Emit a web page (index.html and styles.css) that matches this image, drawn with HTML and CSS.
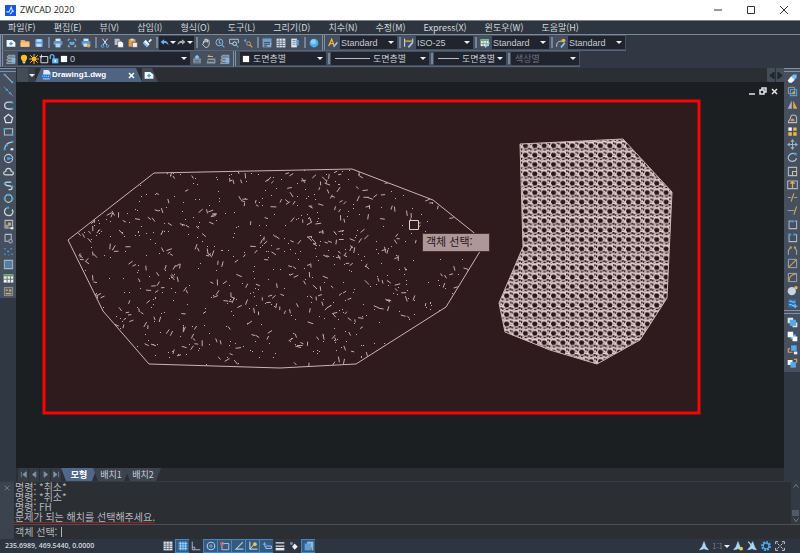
FILE: index.html
```html
<!DOCTYPE html>
<html lang="ko">
<head>
  <meta charset="UTF-8">
  <meta name="viewport" content="width=device-width, initial-scale=1">
  <title>ZWCAD 2020</title>
  <link rel="stylesheet" href="styles.css">
</head>
<body>
  <!-- icon sprite, 16x16 grid -->
  <svg class="sprite" aria-hidden="true">
    <symbol id="new" viewBox="0 0 16 16"><path d="M1 3h9l5 4v7H1z" fill="#f4f8fb"/><path d="M8 6v6M5 9h6" stroke="#3f9bdc" stroke-width="2"/></symbol>
    <symbol id="open" viewBox="0 0 16 16"><path d="M1 3h6l2 2h6v9H1z" fill="#f0ac5c"/><path d="M1 7h14v7H1z" fill="#ffc57f"/></symbol>
    <symbol id="save" viewBox="0 0 16 16"><path d="M2 2h12v12H2z" fill="#5f9ee0"/><path d="M4 2h8v4H4zM4 9h8v5H4z" fill="#c9dcf2"/></symbol>
    <symbol id="print" viewBox="0 0 16 16"><path d="M4 1h8v4H4z" fill="#dfe8f0"/><path d="M1 5h14v6H1z" fill="#5a9bd8"/><path d="M4 9h8v6H4z" fill="#b8d4ee"/></symbol>
    <symbol id="preview" viewBox="0 0 16 16"><path d="M2 5V2h3M11 2h3v3M14 11v3h-3M5 14H2v-3" fill="none" stroke="#9db2c6" stroke-width="1.5"/><path d="M4 6h8v5H4z" fill="#5fa8e6"/></symbol>
    <symbol id="publish" viewBox="0 0 16 16"><path d="M4 1h8v4H4z" fill="#dfe8f0"/><path d="M1 5h14v6H1z" fill="#5a9bd8"/><path d="M4 9h6v5H4z" fill="#d5e4f2"/><circle cx="12" cy="12" r="3" fill="#e5a94e"/></symbol>
    <symbol id="cut" viewBox="0 0 16 16"><path d="M4 1l7 10M12 1L5 11" stroke="#dde5ee" stroke-width="1.6"/><circle cx="4" cy="13" r="2" fill="none" stroke="#57a7e4" stroke-width="1.6"/><circle cx="12" cy="13" r="2" fill="none" stroke="#57a7e4" stroke-width="1.6"/></symbol>
    <symbol id="copy" viewBox="0 0 16 16"><path d="M1 1h7l2 2v8H1z" fill="#b7c2cf"/><path d="M6 5h6l3 3v7H6z" fill="#fff" stroke="#454f5d"/></symbol>
    <symbol id="paste" viewBox="0 0 16 16"><path d="M1 2h11v12H1z" fill="#e79a4a"/><path d="M4 1h5v3H4z" fill="#dbe2ea"/><path d="M7 7h8v8H7z" fill="#f3efe8" stroke="#454f5d"/></symbol>
    <symbol id="brush" viewBox="0 0 16 16"><path d="M10 5l4-4 2 2-4 4z" fill="#e9f0f7"/><path d="M6 3l6 7-4 5-7-7z" fill="#84c1f2"/><path d="M6 3l6 7-2 2-7-6z" fill="#f2f6fa"/></symbol>
    <symbol id="undo" viewBox="0 0 16 16"><path d="M1 7l6-5v3c5 0 8 3 8 8-2-3-4-4-8-4v3z" fill="#65b2f3"/></symbol>
    <symbol id="redo" viewBox="0 0 16 16"><path d="M15 7L9 2v3c-5 0-8 3-8 8 2-3 4-4 8-4v3z" fill="#a8b0b8"/></symbol>
    <symbol id="hand" viewBox="0 0 16 16"><path d="M4 9V5l2 2V2h2v4-4h2v5l1-4 2 1v7l-3 4H7l-5-5z" fill="none" stroke="#d5dbe2" stroke-width="1.3"/></symbol>
    <symbol id="zoomrt" viewBox="0 0 16 16"><circle cx="7" cy="7" r="5.5" fill="none" stroke="#9db7d0" stroke-width="1.5"/><path d="M7 3v5h3M11 11l4 4" fill="none" stroke="#58abea" stroke-width="2"/></symbol>
    <symbol id="zoomwin" viewBox="0 0 16 16"><path d="M15 8V2H1v7h5" fill="none" stroke="#b9c6d3" stroke-width="1.5"/><circle cx="9" cy="9" r="3" fill="none" stroke="#d7e0e8" stroke-width="1.5"/><path d="M11 11l4 4" stroke="#58abea" stroke-width="2"/></symbol>
    <symbol id="zoomprev" viewBox="0 0 16 16"><path d="M1 4l4-3v6z" fill="#58abea"/><circle cx="9" cy="9" r="3" fill="none" stroke="#b9a88c" stroke-width="1.5"/><path d="M11 11l4 4" stroke="#d9a34b" stroke-width="2"/></symbol>
    <symbol id="props" viewBox="0 0 16 16"><path d="M1 1h14v14H1z" fill="#8aa4bd"/><path d="M1 1h14v3H1z" fill="#4ea2e6"/><path d="M3 7h10M3 10h10M3 13h6" stroke="#26384a" stroke-width="1.3"/><path d="M8 12l3 2 4-6" fill="none" stroke="#7cc3ff" stroke-width="1.5"/></symbol>
    <symbol id="grid" viewBox="0 0 16 16"><path d="M1 1h14v14H1z" fill="#e1e8ef"/><path d="M1 5h14M1 8.500h14M1 12h14M5 1v14M10 1v14" stroke="#516477" stroke-width="1.200"/></symbol>
    <symbol id="sheet" viewBox="0 0 16 16"><path d="M2 1h9v14H2z" fill="#dbe4ec"/><path d="M4 4h5M4 7h5M4 10h5" stroke="#4a6076"/><path d="M10 3h4v9h-4z" fill="#4ea2e6"/></symbol>
    <symbol id="help" viewBox="0 0 16 16"><circle cx="8" cy="8" r="7" fill="#4aaef5"/><circle cx="7" cy="6" r="4" fill="#8bd0ff"/></symbol>
    <symbol id="textstyle" viewBox="0 0 16 16"><path d="M1 13L6 2l4 11M3 9h6" fill="none" stroke="#f0b437" stroke-width="2"/><path d="M9 14l6-7" stroke="#8ec6f5" stroke-width="2.500"/></symbol>
    <symbol id="dimstyle" viewBox="0 0 16 16"><path d="M1 1v13M14 1v6" stroke="#dbe2e9" stroke-width="1.600"/><path d="M2 5h11" stroke="#f0b437" stroke-width="2"/><path d="M7 15l7-8" stroke="#a7cdec" stroke-width="2.500"/></symbol>
    <symbol id="tablestyle" viewBox="0 0 16 16"><path d="M1 2h13v11H1z" fill="#e8efe8"/><path d="M1 2h13v3H1z" fill="#6fae72"/><path d="M1 9h13M5 5v8M10 5v8" stroke="#657a6c"/><path d="M8 15l7-8" stroke="#8ec6f5" stroke-width="2.500"/></symbol>
    <symbol id="leaderstyle" viewBox="0 0 16 16"><path d="M1 14c0-8 3-9 9-9" fill="none" stroke="#c1cad3" stroke-width="1.600"/><circle cx="12" cy="4" r="3" fill="#f0b437"/><path d="M8 15l6-7" stroke="#8ec6f5" stroke-width="2.500"/></symbol>
    <symbol id="layers" viewBox="0 0 16 16"><path d="M4 2h10v3H2zM3 7h11v3H1zM3 12h11v3H1z" fill="#59687a" stroke="#cbd5df"/><path d="M9 6h6v8H9z" fill="#7db9e8"/></symbol>
    <symbol id="bulb" viewBox="0 0 16 16"><circle cx="8" cy="6" r="5" fill="#ffc21f"/><path d="M5 9h6v3H5z" fill="#ffc21f"/><path d="M6 12h4v3H6z" fill="#d3d7db"/></symbol>
    <symbol id="sun" viewBox="0 0 16 16"><circle cx="8" cy="8" r="3.500" fill="#ffb81f"/><path d="M8 0v16M0 8h16M2 2l12 12M14 2L2 14" stroke="#ffb81f" stroke-width="1.600"/></symbol>
    <symbol id="vpfreeze" viewBox="0 0 16 16"><path d="M3 4h11v10H3zM1 4h4M4 1v5" fill="none" stroke="#dce2e8" stroke-width="1.500"/></symbol>
    <symbol id="lock" viewBox="0 0 16 16"><path d="M2 8V4c0-4 6-4 6 0v4" fill="none" stroke="#63b7f4" stroke-width="2"/><path d="M5 7h10v8H5z" fill="#63b7f4"/><path d="M10 9v4" stroke="#fff" stroke-width="2"/></symbol>
    <symbol id="white" viewBox="0 0 16 16"><path d="M3 3h10v10H3z" fill="#fff"/></symbol>
    <symbol id="layercur" viewBox="0 0 16 16"><path d="M2 7h12v8H2z" fill="#8c99a6"/><path d="M4 10h8M4 13h8" stroke="#36414d"/><path d="M4 5l4-4 4 4-4 3z" fill="#86c4f5"/></symbol>
    <symbol id="layerprev" viewBox="0 0 16 16"><path d="M3 7h12v8H1z" fill="#8c99a6"/><path d="M3 11h10" stroke="#36414d" stroke-width="2"/><path d="M3 4h8M3 4l3-3" stroke="#d8b36a" stroke-width="1.600"/></symbol>
    <symbol id="app" viewBox="0 0 16 16"><path d="M0 0h16v16H0z" fill="#1655e8"/><path d="M2 10h4l3-7 2 6M7 13c4 0 1-5 6-4" fill="none" stroke="#d5e7ff" stroke-width="1.500"/></symbol>
    <symbol id="dwg" viewBox="0 0 16 16"><path d="M4 0h8l3 4v9H3z" fill="#dceaf8"/><path d="M1 7h14v6H1z" fill="#1f78dc"/><path d="M3 9v2M6 9v2M9 9v2M12 9v2" stroke="#fff"/><path d="M3 13h11v2H3z" fill="#8dbcf0"/></symbol>
    <symbol id="line" viewBox="0 0 16 16"><path d="M2 2l12 12" stroke="#a9b8c6" stroke-width="1.500"/><path d="M1 1h3v3H1zM12 12h3v3h-3z" fill="#39a8dd"/></symbol>
    <symbol id="xline" viewBox="0 0 16 16"><path d="M1 1l14 14" stroke="#7e92a5" stroke-width="1.300"/><path d="M4 4h3v3H4zM9 9h3v3H9z" fill="#39a8dd"/></symbol>
    <symbol id="pline" viewBox="0 0 16 16"><path d="M13 3H8C0 3 1 13 8 13h5" fill="none" stroke="#cbd4dc" stroke-width="2"/><path d="M12 2h3v3h-3zM12 11h3v3h-3z" fill="#39a8dd"/></symbol>
    <symbol id="polygon" viewBox="0 0 16 16"><path d="M8 2l6 5-2 7H4L2 7z" fill="none" stroke="#dde3e9" stroke-width="1.800"/></symbol>
    <symbol id="rect" viewBox="0 0 16 16"><path d="M2 4h12v9H2z" fill="none" stroke="#b5c0cb" stroke-width="1.500"/><path d="M1 3h3v3H1zM12 11h3v3h-3z" fill="#39a8dd"/></symbol>
    <symbol id="arc" viewBox="0 0 16 16"><path d="M2 14C3 7 7 3 14 3" fill="none" stroke="#c5cfd8" stroke-width="1.700"/><path d="M1 12h3v3H1zM4 6h3v3H4zM12 1h3v3h-3z" fill="#39a8dd"/><path d="M11 12h4v3h-4z" fill="#eef1f4"/></symbol>
    <symbol id="circle" viewBox="0 0 16 16"><circle cx="8" cy="8" r="6" fill="none" stroke="#bcc8d3" stroke-width="1.700"/><path d="M8 8h6" stroke="#39a8dd" stroke-width="1.500"/><path d="M6 6h4v4H6z" fill="#39a8dd"/></symbol>
    <symbol id="cloud" viewBox="0 0 16 16"><path d="M4 13c-4 0-4-5 0-5 0-6 8-6 8 0 4 0 4 5 0 5z" fill="none" stroke="#cfd7de" stroke-width="1.700"/></symbol>
    <symbol id="spline" viewBox="0 0 16 16"><path d="M12 3H6C2 3 2 7 6 8l5 1c4 2 2 5-1 5H8" fill="none" stroke="#cfd7de" stroke-width="2"/><path d="M1 4h3v3H1zM12 8h3v3h-3z" fill="#39a8dd"/></symbol>
    <symbol id="ellipse" viewBox="0 0 16 16"><circle cx="8" cy="8" r="5.500" fill="none" stroke="#bcc8d3" stroke-width="1.800"/><path d="M1 6h3v4H1zM12 6h3v4h-3zM6 1h4v3H6z" fill="#39a8dd"/></symbol>
    <symbol id="earc" viewBox="0 0 16 16"><path d="M5 3c-5 4-3 11 4 11 5 0 7-6 4-9" fill="none" stroke="#cfd7de" stroke-width="1.800"/><path d="M5 1h4v3H5z" fill="#39a8dd"/></symbol>
    <symbol id="insert" viewBox="0 0 16 16"><path d="M3 2h11v11H3z" fill="none" stroke="#b7bec6" stroke-width="1.500"/><circle cx="5" cy="11" r="3" fill="#8e9aa6"/><path d="M7 5h5v5H7z" fill="#c0a56e"/><path d="M11 12h4v3h-4z" fill="#eef1f4"/></symbol>
    <symbol id="block" viewBox="0 0 16 16"><path d="M3 2h9v7M3 2v10h5" fill="none" stroke="#b7bec6" stroke-width="1.500"/><circle cx="11" cy="12" r="2.500" fill="none" stroke="#9fb4c8" stroke-width="1.500"/></symbol>
    <symbol id="points" viewBox="0 0 16 16"><path d="M2 3h2v2H2zM11 3h2v2h-2zM6 7h3v2H6zM2 11h2v2H2zM12 11h2v2h-2zM8 12h1v2H8z" fill="#39a8dd"/></symbol>
    <symbol id="hatch" viewBox="0 0 16 16"><path d="M2 2h12v12H2z" fill="#4e7fa8" stroke="#a9b2bb" stroke-width="1.500"/></symbol>
    <symbol id="table" viewBox="0 0 16 16"><path d="M1 2h14v12H1z" fill="#eef2ee"/><path d="M1 2h14v3H1z" fill="#5f9a5f"/><path d="M1 9h14M6 5v9M11 5v9" stroke="#5b6a60" stroke-width="1.300"/></symbol>
    <symbol id="mtext" viewBox="0 0 16 16"><path d="M2 2h12v12H2z" fill="#5d6368" stroke="#aab0b6"/><path d="M4 5h3v2H4zM9 5h3v3H9zM4 10h8v2H4z" fill="#d2b06c"/></symbol>
    <symbol id="erase" viewBox="0 0 16 16"><path d="M9 2l5 0 0 5-5 5-5-5z" fill="#6fc1f7"/><path d="M6 5l5 5-4 4H3l-2-3z" fill="#f3f6f9"/></symbol>
    <symbol id="copyobj" viewBox="0 0 16 16"><path d="M2 2h9v9H2z" fill="none" stroke="#8fa0b0" stroke-width="1.400"/><path d="M5 5h9v9H5z" fill="none" stroke="#4c9fe0" stroke-width="1.500"/><path d="M8 8h4v4H8z" fill="#d5a34c"/></symbol>
    <symbol id="mirror" viewBox="0 0 16 16"><path d="M7 2v12H1z" fill="#a7b2bd"/><path d="M9 2v12h6z" fill="#dba850"/></symbol>
    <symbol id="offset" viewBox="0 0 16 16"><path d="M2 14c0-4 2-4 3-6 0-7 9-7 9 0v6z" fill="none" stroke="#b8bec5" stroke-width="1.500"/><path d="M5 12c0-5 6-6 6 0z" fill="#c99b51"/></symbol>
    <symbol id="array" viewBox="0 0 16 16"><path d="M2 2h5v5H2z" fill="#f3f3f3"/><path d="M9 2h5v5H9zM2 9h5v5H2zM9 9h5v5H9z" fill="#f0b649"/></symbol>
    <symbol id="move" viewBox="0 0 16 16"><path d="M8 0l3 4H5zM8 16l3-4H5zM0 8l4-3v6zM16 8l-4-3v6z" fill="#9fb2c5"/><path d="M8 3v10M3 8h10" stroke="#9fb2c5" stroke-width="1.500"/></symbol>
    <symbol id="rotate" viewBox="0 0 16 16"><path d="M12 3C6 0 1 5 2 10c2 5 10 5 12-1" fill="none" stroke="#a9bccd" stroke-width="1.800"/><path d="M9 1h5v5z" fill="#4c9fe0"/></symbol>
    <symbol id="scale" viewBox="0 0 16 16"><path d="M14 8V2H2v12h6" fill="none" stroke="#b1bac3" stroke-width="1.500"/><path d="M8 8h6v6H8z" fill="none" stroke="#d0c0a0" stroke-width="1.500"/></symbol>
    <symbol id="stretch" viewBox="0 0 16 16"><path d="M1 3h14v11H1z" fill="none" stroke="#b1bac3" stroke-width="1.500"/><path d="M8 4v9M5 7l3-3 3 3" fill="none" stroke="#e0ae50" stroke-width="1.800"/></symbol>
    <symbol id="trim" viewBox="0 0 16 16"><path d="M6 14l4-12" stroke="#d5a34c" stroke-width="1.700"/><path d="M1 8h5M10 8h5" stroke="#90a3b5" stroke-width="1.400"/></symbol>
    <symbol id="extend" viewBox="0 0 16 16"><path d="M10 14l4-12" stroke="#d5a34c" stroke-width="1.700"/><path d="M1 8h10" stroke="#90a3b5" stroke-width="1.400"/></symbol>
    <symbol id="break1" viewBox="0 0 16 16"><path d="M6 3H3v11h11V3h-3" fill="none" stroke="#b1bac3" stroke-width="1.500"/><path d="M6 2h4v3H6z" fill="#4c9fe0"/></symbol>
    <symbol id="break2" viewBox="0 0 16 16"><path d="M3 3v11h11V3" fill="none" stroke="#b1bac3" stroke-width="1.500"/><path d="M2 2h4v3H2zM9 2h4v3H9z" fill="#3aa0d8"/></symbol>
    <symbol id="join" viewBox="0 0 16 16"><path d="M2 14V8l3-4M14 14V8l-3-4" fill="none" stroke="#9fabb7" stroke-width="1.500"/><path d="M4 2h3v3H4zM10 2h3v3h-3z" fill="#d5a34c"/></symbol>
    <symbol id="chamfer" viewBox="0 0 16 16"><path d="M2 2h12v12H2z" fill="none" stroke="#9fabb7" stroke-width="1.400"/><path d="M3 13L13 3" stroke="#d5a34c" stroke-width="1.500"/><path d="M2 2h4" stroke="#3aa0d8" stroke-width="2"/></symbol>
    <symbol id="fillet" viewBox="0 0 16 16"><path d="M2 2h12v12H2z" fill="none" stroke="#9fabb7" stroke-width="1.400"/><path d="M3 13c0-6 3-9 10-10" fill="none" stroke="#d5a34c" stroke-width="1.500"/></symbol>
    <symbol id="explode" viewBox="0 0 16 16"><circle cx="7" cy="9" r="6" fill="#c7d4e2"/><circle cx="13" cy="4" r="2.500" fill="#f0b649"/></symbol>
    <symbol id="edit" viewBox="0 0 16 16"><path d="M2 2h11v12H2z" fill="#2f6fae"/><path d="M3 5c4-3 5 4 9 0M3 10c4-3 5 4 9 0" fill="none" stroke="#8ccbfa" stroke-width="1.500"/><path d="M9 12h6M12 9v6" stroke="#5fb4f5" stroke-width="2"/></symbol>
    <symbol id="front" viewBox="0 0 16 16"><path d="M1 1h8v8H1zM8 8h7v7H8z" fill="#dfe5ea"/><path d="M4 4h9v9H4z" fill="#53a9f0"/></symbol>
    <symbol id="back" viewBox="0 0 16 16"><path d="M5 5h8v7H5z" fill="#53a9f0"/><path d="M1 1h8v8H1zM8 8h7v7H8z" fill="#fff"/></symbol>
    <symbol id="above" viewBox="0 0 16 16"><path d="M6 2h8v8H6z" fill="#53a9f0"/><path d="M10 11h5v4h-5z" fill="#eee"/><path d="M2 6v6h6M1 9l3-3" fill="none" stroke="#d5a34c" stroke-width="1.800"/></symbol>
    <symbol id="under" viewBox="0 0 16 16"><path d="M1 3h7v7H1z" fill="#fff"/><path d="M5 6h8v8H5z" fill="#53a9f0"/><path d="M10 2h4v5" fill="none" stroke="#d5a34c" stroke-width="1.800"/></symbol>
    <symbol id="snap" viewBox="0 0 16 16"><path d="M1 1h14v14H1z" fill="#3a86cb"/><path d="M1 4h14M1 8h14M1 12h14M4 1v14M8 1v14M12 1v14" stroke="#b8dbf8"/></symbol>
    <symbol id="ortho" viewBox="0 0 16 16"><path d="M2 1v13h13M2 10h4v4" fill="none" stroke="#aebbc6" stroke-width="1.500"/></symbol>
    <symbol id="polar" viewBox="0 0 16 16"><circle cx="8" cy="8" r="6" fill="none" stroke="#abc9e4" stroke-width="1.800"/><circle cx="8" cy="8" r="2" fill="none" stroke="#abc9e4"/></symbol>
    <symbol id="osnap" viewBox="0 0 16 16"><path d="M3 4h11v10H3z" fill="none" stroke="#b5c5d4" stroke-width="1.500"/><path d="M1 2h5v4H1z" fill="none" stroke="#d95c5c" stroke-width="1.500"/></symbol>
    <symbol id="track" viewBox="0 0 16 16"><path d="M14 2L3 13h12" fill="none" stroke="#a9c9e5" stroke-width="1.700"/></symbol>
    <symbol id="ducs" viewBox="0 0 16 16"><path d="M3 1v12h12M3 13l6-7" fill="none" stroke="#d3dfe9" stroke-width="1.600"/><circle cx="11" cy="5" r="3" fill="#f0c24a"/></symbol>
    <symbol id="dyn" viewBox="0 0 16 16"><path d="M4 2v7M1 5h6" stroke="#70b8f0" stroke-width="1.500"/><path d="M6 8h9v4H6z" fill="none" stroke="#9cc6ea" stroke-width="1.500"/></symbol>
    <symbol id="lwt" viewBox="0 0 16 16"><path d="M1 3h14M1 8h14" stroke="#e1e6ea" stroke-width="2"/><path d="M1 13h14" stroke="#e1e6ea" stroke-width="4"/></symbol>
    <symbol id="qp" viewBox="0 0 16 16"><path d="M2 2h4v4H2z" fill="#6e9fca"/><path d="M9 4l5 5-5 5-4-5z" fill="#eef1f4"/></symbol>
    <symbol id="cycle" viewBox="0 0 16 16"><path d="M5 1h10v10H5z" fill="#8bbbe4"/><path d="M1 4h10v11H1z" fill="#5d9fd9"/><path d="M12 11h3v4h-3z" fill="#cfae6e"/></symbol>
    <symbol id="anno" viewBox="0 0 16 16"><path d="M8 1l3 8 4 5-5-1-2-1-2 1-5 1 4-5z" fill="#a9d8f7" stroke="#a9d8f7"/></symbol>
    <symbol id="annovis" viewBox="0 0 16 16"><path d="M8 1l3 8 4 5-5-1-2-1-2 1-5 1 4-5z" fill="#a9d8f7" stroke="#a9d8f7"/><circle cx="13" cy="12" r="3" fill="#f0c24a"/></symbol>
    <symbol id="annoauto" viewBox="0 0 16 16"><path d="M9 1l3 8 3 5-5-1-2-1-2 1-5 1 4-5z" fill="#a9d8f7" stroke="#a9d8f7"/><path d="M2 1l5 6" stroke="#a9d8f7" stroke-width="2"/></symbol>
    <symbol id="gear" viewBox="0 0 16 16"><circle cx="8" cy="8" r="6.500" fill="none" stroke="#4ba9ec" stroke-width="3" stroke-dasharray="3 2"/><circle cx="8" cy="8" r="4.500" fill="none" stroke="#4ba9ec" stroke-width="2"/></symbol>
    <symbol id="full" viewBox="0 0 16 16"><path d="M1 5V1h4M11 1h4v4M15 11v4h-4M5 15H1v-4M4 4l3 3M12 4L9 7M4 12l3-3M12 12L9 9" fill="none" stroke="#c2c9cf" stroke-width="1.600"/></symbol>
  </svg>

  <header class="titlebar">
    <svg class="app-icon"><use href="#app"/></svg>
    <span class="app-name">ZWCAD 2020</span>
    <div class="win-buttons">
      <button aria-label="최소화"><svg viewBox="0 0 10 10"><path d="M1 5h8"/></svg></button>
      <button aria-label="최대화"><svg viewBox="0 0 10 10"><path d="M1.500 1.500h7v7h-7z"/></svg></button>
      <button aria-label="닫기"><svg viewBox="0 0 10 10"><path d="M1 1l8 8M9 1L1 9"/></svg></button>
    </div>
  </header>

  <nav class="menubar">
    <button>파일(F)</button>
    <button>편집(E)</button>
    <button>뷰(V)</button>
    <button>삽입(I)</button>
    <button>형식(O)</button>
    <button>도구(L)</button>
    <button>그리기(D)</button>
    <button>치수(N)</button>
    <button>수정(M)</button>
    <button>Express(X)</button>
    <button>윈도우(W)</button>
    <button>도움말(H)</button>
  </nav>

  <div class="toolbars">
    <div class="toolrow">
      <div class="toolbar">
        <button class="tool" aria-label="새로 만들기"><svg><use href="#new"/></svg></button>
        <button class="tool" aria-label="열기"><svg><use href="#open"/></svg></button>
        <button class="tool" aria-label="저장"><svg><use href="#save"/></svg></button>
        <span class="sep"></span>
        <button class="tool" aria-label="인쇄"><svg><use href="#print"/></svg></button>
        <button class="tool" aria-label="미리보기"><svg><use href="#preview"/></svg></button>
        <button class="tool" aria-label="게시"><svg><use href="#publish"/></svg></button>
        <span class="sep"></span>
        <button class="tool" aria-label="잘라내기"><svg><use href="#cut"/></svg></button>
        <button class="tool" aria-label="복사"><svg><use href="#copy"/></svg></button>
        <button class="tool" aria-label="붙여넣기"><svg><use href="#paste"/></svg></button>
        <button class="tool" aria-label="특성 일치"><svg><use href="#brush"/></svg></button>
        <span class="sep"></span>
        <div class="history">
          <button aria-label="명령 취소"><svg><use href="#undo"/></svg><i class="caret"></i></button>
          <button aria-label="명령 복구"><svg><use href="#redo"/></svg><i class="caret"></i></button>
        </div>
        <span class="sep"></span>
        <button class="tool" aria-label="초점 이동"><svg><use href="#hand"/></svg></button>
        <button class="tool" aria-label="실시간 줌"><svg><use href="#zoomrt"/></svg></button>
        <button class="tool" aria-label="줌 윈도우"><svg><use href="#zoomwin"/></svg></button>
        <button class="tool" aria-label="이전 줌"><svg><use href="#zoomprev"/></svg></button>
        <span class="sep"></span>
        <button class="tool" aria-label="특성"><svg><use href="#props"/></svg></button>
        <button class="tool" aria-label="디자인 센터"><svg><use href="#grid"/></svg></button>
        <button class="tool" aria-label="도구 팔레트"><svg><use href="#sheet"/></svg></button>
        <span class="sep"></span>
        <button class="tool" aria-label="도움말"><svg><use href="#help"/></svg></button>
      </div>
      <div class="toolbar">
        <button class="tool" aria-label="문자 스타일"><svg><use href="#textstyle"/></svg></button>
        <div class="combo style"><select aria-label="문자 스타일"><option>Standard</option></select><i class="caret"></i></div>
        <span class="sep"></span>
        <button class="tool" aria-label="치수 스타일"><svg><use href="#dimstyle"/></svg></button>
        <div class="combo style"><select aria-label="치수 스타일"><option>ISO-25</option></select><i class="caret"></i></div>
        <span class="sep"></span>
        <button class="tool" aria-label="테이블 스타일"><svg><use href="#tablestyle"/></svg></button>
        <div class="combo style"><select aria-label="테이블 스타일"><option>Standard</option></select><i class="caret"></i></div>
        <span class="sep"></span>
        <button class="tool" aria-label="지시선 스타일"><svg><use href="#leaderstyle"/></svg></button>
        <div class="combo style"><select aria-label="지시선 스타일"><option>Standard</option></select><i class="caret"></i></div>
      </div>
    </div>
    <div class="toolrow">
      <div class="toolbar">
        <button class="tool" aria-label="도면층 특성"><svg><use href="#layers"/></svg></button>
        <div class="combo layer">
          <svg><use href="#bulb"/></svg><svg><use href="#sun"/></svg><svg><use href="#vpfreeze"/></svg><svg><use href="#lock"/></svg><svg><use href="#white"/></svg>
          <select aria-label="도면층"><option>0</option></select><i class="caret"></i>
        </div>
        <button class="tool" aria-label="현재로 설정"><svg><use href="#layercur"/></svg></button>
        <button class="tool" aria-label="이전 도면층"><svg><use href="#layerprev"/></svg></button>
        <button class="tool" aria-label="도면층 상태"><svg><use href="#layers"/></svg></button>
      </div>
      <div class="toolbar properties">
        <div class="combo color"><svg><use href="#white"/></svg><select aria-label="색상"><option>도면층별</option></select><i class="caret"></i></div>
        <span class="sep"></span>
        <div class="combo ltype"><span class="rule"></span><select aria-label="선종류"><option>도면층별</option></select><i class="caret"></i></div>
        <span class="sep"></span>
        <div class="combo lweight"><span class="rule"></span><select aria-label="선가중치"><option>도면층별</option></select><i class="caret"></i></div>
        <span class="sep"></span>
        <div class="combo plot"><select aria-label="플롯 스타일" disabled><option>색상별</option></select><i class="caret"></i></div>
      </div>
    </div>
  </div>

  <div class="workspace">
    <aside class="side">
      <div class="palette draw">
        <button class="tool" aria-label="선"><svg><use href="#line"/></svg></button>
        <button class="tool" aria-label="구성선"><svg><use href="#xline"/></svg></button>
        <button class="tool" aria-label="폴리선"><svg><use href="#pline"/></svg></button>
        <button class="tool" aria-label="다각형"><svg><use href="#polygon"/></svg></button>
        <button class="tool" aria-label="직사각형"><svg><use href="#rect"/></svg></button>
        <button class="tool" aria-label="호"><svg><use href="#arc"/></svg></button>
        <button class="tool" aria-label="원"><svg><use href="#circle"/></svg></button>
        <button class="tool" aria-label="구름형 수정기호"><svg><use href="#cloud"/></svg></button>
        <button class="tool" aria-label="스플라인"><svg><use href="#spline"/></svg></button>
        <button class="tool" aria-label="타원"><svg><use href="#ellipse"/></svg></button>
        <button class="tool" aria-label="타원 호"><svg><use href="#earc"/></svg></button>
        <button class="tool" aria-label="블록 삽입"><svg><use href="#insert"/></svg></button>
        <button class="tool" aria-label="블록 만들기"><svg><use href="#block"/></svg></button>
        <button class="tool" aria-label="점"><svg><use href="#points"/></svg></button>
        <button class="tool" aria-label="해치"><svg><use href="#hatch"/></svg></button>
        <button class="tool" aria-label="테이블"><svg><use href="#table"/></svg></button>
        <button class="tool" aria-label="여러 줄 문자"><svg><use href="#mtext"/></svg></button>
      </div>
    </aside>

    <main class="document">
      <div class="filetabs">
        <span class="stub"></span>
        <button class="tablist" aria-label="탭 목록"><i class="caret"></i></button>
        <div class="filetab">
          <svg><use href="#dwg"/></svg><span>Drawing1.dwg</span>
          <button aria-label="탭 닫기"><svg viewBox="0 0 10 10"><path d="M2 3l5 5M7 3L2 8" stroke="#fff" stroke-width="1.500"/></svg></button>
        </div>
        <button class="newtab" aria-label="새 도면"><svg><use href="#new"/></svg></button>
        <div class="tabscroll">
          <button aria-label="왼쪽"><svg viewBox="0 0 8 10"><path d="M7 1v8L2 5z"/></svg></button>
          <button aria-label="오른쪽"><svg viewBox="0 0 8 10"><path d="M1 1v8l5-4z"/></svg></button>
        </div>
      </div>

      <div class="canvas">
        <svg class="drawing">
          <defs>
            <pattern id="gravel" width="28" height="28" patternUnits="userSpaceOnUse" patternTransform="translate(505 60) scale(0.335)">
              <path d="M0 0h28v28H0z" fill="#e6d2d4"/>
              <path d="M8 4h9l4 5-2 8-9 2-5-7zM22 1h5v5h-4zM0 19h5l-2 6H0zM10 22h8v4h-7zM21 17h6v6h-6zM0 2h4l-1 7H0z" fill="#2a171a"/>
              <path d="M5 19l5 4M17 18l3 8M21 11l7 2M4 26l5 1" stroke="#7d6568" stroke-width="2"/>
            </pattern>
            <clipPath id="concrete-area"><path d="M52 158L138 91L336 87L417 118L457 150L469 160L463 171L430 225L340 282L264 286L133 282L87 229z"/></clipPath>
          </defs>
          <rect x="28" y="19" width="655" height="312" fill="#2f1b1e" stroke="#f80404" stroke-width="3"/>
          <g clip-path="url(#concrete-area)"><path id="concrete" stroke="#c2abad" fill="none"/></g>
          <path d="M52 158L138 91L336 87L417 118L457 150L469 160L463 171L430 225L340 282L264 286L133 282L87 229z" fill="none" stroke="#c9b3b5"/>
          <path d="M504 62L607 57L656 110L651 216L624 258L581 282L534 268L489 250L483 221L507 165z" fill="url(#gravel)" stroke="#cbb5b7"/>
          <path d="M393.500 138.500h9v9h-9z" fill="#2f1b1e" stroke="#dccfd0"/>
        </svg>
        <div class="tooltip">객체 선택:</div>
        <div class="mdi">
          <button aria-label="도면 최소화"><svg viewBox="0 0 10 10"><path d="M2 8h6"/></svg></button>
          <button aria-label="도면 복원"><svg viewBox="0 0 10 10"><path d="M2 4h4v4H2zM4 4V2h4v4H6"/></svg></button>
          <button aria-label="도면 닫기"><svg viewBox="0 0 10 10"><path d="M3 3l5 5M8 3L3 8"/></svg></button>
        </div>
      </div>

      <div class="layouttabs">
        <div class="tabnav">
          <button aria-label="처음"><svg viewBox="0 0 10 10"><path d="M2 1v8M9 1v8L4 5z"/></svg></button>
          <button aria-label="이전"><svg viewBox="0 0 10 10"><path d="M7 1v8L2 5z"/></svg></button>
          <button aria-label="다음"><svg viewBox="0 0 10 10"><path d="M3 1v8l5-4z"/></svg></button>
          <button aria-label="마지막"><svg viewBox="0 0 10 10"><path d="M8 1v8M1 1v8l5-4z"/></svg></button>
        </div>
        <button class="layout active">모형</button>
        <button class="layout">배치1</button>
        <button class="layout">배치2</button>
      </div>
    </main>

    <aside class="side">
      <div class="palette modify">
        <button class="tool" aria-label="지우기"><svg><use href="#erase"/></svg></button>
        <button class="tool" aria-label="객체 복사"><svg><use href="#copyobj"/></svg></button>
        <button class="tool" aria-label="대칭"><svg><use href="#mirror"/></svg></button>
        <button class="tool" aria-label="간격띄우기"><svg><use href="#offset"/></svg></button>
        <button class="tool" aria-label="배열"><svg><use href="#array"/></svg></button>
        <button class="tool" aria-label="이동"><svg><use href="#move"/></svg></button>
        <button class="tool" aria-label="회전"><svg><use href="#rotate"/></svg></button>
        <button class="tool" aria-label="축척"><svg><use href="#scale"/></svg></button>
        <button class="tool" aria-label="신축"><svg><use href="#stretch"/></svg></button>
        <button class="tool" aria-label="자르기"><svg><use href="#trim"/></svg></button>
        <button class="tool" aria-label="연장"><svg><use href="#extend"/></svg></button>
        <button class="tool" aria-label="점에서 끊기"><svg><use href="#break1"/></svg></button>
        <button class="tool" aria-label="끊기"><svg><use href="#break2"/></svg></button>
        <button class="tool" aria-label="결합"><svg><use href="#join"/></svg></button>
        <button class="tool" aria-label="모따기"><svg><use href="#chamfer"/></svg></button>
        <button class="tool" aria-label="모깎기"><svg><use href="#fillet"/></svg></button>
        <button class="tool" aria-label="분해"><svg><use href="#explode"/></svg></button>
        <button class="tool" aria-label="편집"><svg><use href="#edit"/></svg></button>
      </div>
      <div class="palette order">
        <button class="tool" aria-label="맨 앞으로"><svg><use href="#front"/></svg></button>
        <button class="tool" aria-label="맨 뒤로"><svg><use href="#back"/></svg></button>
        <button class="tool" aria-label="객체 위로"><svg><use href="#above"/></svg></button>
        <button class="tool" aria-label="객체 아래로"><svg><use href="#under"/></svg></button>
      </div>
    </aside>
  </div>

  <section class="command">
    <button class="command-close" aria-label="명령창 닫기"><svg viewBox="0 0 10 10"><path d="M2 2l6 6M8 2L2 8"/></svg></button>
    <div class="command-main">
      <div class="log">
        <div class="lines">
          <p>명령: *취소*</p>
          <p>명령: *취소*</p>
          <p>명령: FH</p>
          <p class="marked">문제가 되는 해치를 선택해주세요.</p>
        </div>
        <div class="scroll">
          <button aria-label="위로"><svg viewBox="0 0 10 10"><path d="M2 7l3-4 3 4"/></svg></button>
          <span class="thumb"></span>
          <button aria-label="아래로"><svg viewBox="0 0 10 10"><path d="M2 3l3 4 3-4"/></svg></button>
        </div>
      </div>
      <div class="prompt">
        <label for="cmd">객체 선택:</label>
        <span class="cursor"></span>
        <input id="cmd" type="text">
      </div>
    </div>
  </section>

  <footer class="statusbar">
    <span class="coords">235.6989, 469.5440, 0.0000</span>
    <div class="modes">
      <button class="tool" aria-label="그리드"><svg><use href="#grid"/></svg></button>
      <button class="tool on" aria-label="스냅"><svg><use href="#snap"/></svg></button>
      <button class="tool" aria-label="직교"><svg><use href="#ortho"/></svg></button>
      <button class="tool on" aria-label="극좌표"><svg><use href="#polar"/></svg></button>
      <button class="tool on" aria-label="객체 스냅"><svg><use href="#osnap"/></svg></button>
      <button class="tool on" aria-label="객체 스냅 추적"><svg><use href="#track"/></svg></button>
      <button class="tool on" aria-label="동적 UCS"><svg><use href="#ducs"/></svg></button>
      <button class="tool on" aria-label="동적 입력"><svg><use href="#dyn"/></svg></button>
      <button class="tool" aria-label="선가중치"><svg><use href="#lwt"/></svg></button>
      <button class="tool" aria-label="빠른 특성"><svg><use href="#qp"/></svg></button>
      <button class="tool on" aria-label="선택 순환"><svg><use href="#cycle"/></svg></button>
    </div>
    <div class="annotation">
      <button class="tool" aria-label="주석"><svg><use href="#anno"/></svg></button>
      <button class="ratio">1:1<i class="caret"></i></button>
      <button class="tool" aria-label="주석 가시성"><svg><use href="#annovis"/></svg></button>
      <button class="tool" aria-label="주석 자동 축척"><svg><use href="#annoauto"/></svg></button>
      <button class="tool" aria-label="설정"><svg><use href="#gear"/></svg></button>
      <button class="tool" aria-label="전체 화면"><svg><use href="#full"/></svg></button>
    </div>
  </footer>

  <script src="hatch.js"></script>
</body>
</html>
```
FILE: styles.css
```css
* { box-sizing: border-box; }
body {
  margin: 0; height: 100vh; overflow: hidden;
  display: flex; flex-direction: column;
  background: #2b2e33; color: #d5d9de;
  font: 9px/12px "Noto Sans CJK KR", sans-serif;
}
button {
  margin: 0; padding: 0; border: 0;
  background: none; color: inherit; font: inherit;
  display: flex; align-items: center; justify-content: center;
}
.sprite { position: absolute; width: 0; height: 0; }
.caret {
  border: 3px solid transparent; border-top: 3px solid #eef1f4; border-bottom: 0;
  flex: none;
}

/* title bar */
.titlebar {
  display: flex; align-items: center; height: 20px; flex: none;
  padding-left: 5px; background: #fff; color: #222;
  font: 9px/14px "Open Sans", sans-serif;
}
.app-icon { width: 11px; height: 11px; margin-right: 4px; }
.win-buttons { margin-left: auto; display: flex; }
.win-buttons button { width: 33px; height: 18px; }
.win-buttons svg { width: 10px; height: 10px; fill: none; stroke: #333; }

.menubar {
  display: flex; gap: 18px; height: 14px; flex: none; padding-left: 8px;
  background: #2d3640; border-top: 1px solid #7d8388;
}

/* toolbars */
.toolbars { flex: none; background: #323843; border-top: 1px solid #7c8a99; padding-bottom: 1px; }
.toolrow { display: flex; height: 16px; }
.toolbar {
  display: flex; align-items: center; padding: 0 1px;
  background: #454f5d; border-left: 3px double #8090a6;
  border-bottom: 1px solid #566475;
}
.properties { padding-left: 4px; }
.tool { width: 14px; height: 14px; flex: none; }
.tool svg { width: 10px; height: 10px; }
.sep { width: 2px; height: 11px; margin: 0 1px 0 2px; background: #74849a; flex: none; }
.history { display: flex; align-items: center; width: 35px; height: 14px; background: #20242f; }
.history button { width: 17px; }
.history svg { width: 9px; height: 9px; margin-right: 1px; }
.combo {
  display: flex; align-items: center; height: 13px;
  background: #20242f; padding: 0 3px 0 1px;
}
.combo svg { width: 10px; height: 10px; flex: none; }
.combo select {
  appearance: none; border: 0; padding: 0; margin: 0; background: none;
  color: #c6cbd2; font: 9px/12px "Liberation Sans", "Noto Sans CJK KR", sans-serif;
  flex: 1; min-width: 0; overflow: hidden;
}
.combo select:disabled { color: #6b7280; opacity: 1; }
.style { width: 57px; }
.layer { width: 172px; }
.layer select { padding-left: 1px; }
.color { width: 86px; }
.color svg { margin-right: 2px; }
.ltype { width: 98px; padding-left: 4px; }
.lweight { width: 72px; padding-left: 4px; }
.plot { width: 68px; padding-left: 4px; }
.rule { height: 1px; background: #b9bec6; margin-right: 3px; flex: none; }
.ltype .rule { width: 35px; }
.lweight .rule { width: 21px; }

/* workspace */
.workspace { display: flex; flex: 1; min-height: 0; }
.side { width: 16px; flex: none; background: #303843; }
.palette {
  display: flex; flex-direction: column; justify-content: space-between; align-items: center;
  background: #454f5d; border-top: 4px double #8090a6;
}
.palette .tool { height: 13px; }
.palette svg { width: 11px; height: 11px; }
.draw { height: 230px; }
.modify { height: 242px; }
.order { height: 62px; padding: 2px 0; }

.document { flex: 1; min-width: 0; display: flex; flex-direction: column; background: #1b1f22; }
.filetabs { display: flex; align-items: stretch; height: 14px; flex: none; padding-left: 1px; background: #2b2e33; }
.stub { width: 11px; background: #434d58; }
.tablist { width: 7px; background: #383f49; }
.filetab {
  display: flex; align-items: center; width: 107px; padding: 0 4px 0 6px;
  background: #4f6482; color: #fff; font: bold 8px/12px "Liberation Sans", sans-serif;
  clip-path: polygon(6px 0, 101px 0, 100% 100%, 0 100%);
}
.filetab svg { width: 10px; height: 10px; margin-right: 1px; }
.filetab button { margin-left: auto; }
.newtab {
  width: 16px; background: #434b57;
  clip-path: polygon(0 0, 10px 0, 100% 100%, 0 100%);
}
.newtab svg { width: 10px; height: 10px; margin-right: 2px; }
.tabscroll { display: flex; gap: 1px; margin-left: auto; }
.tabscroll button { width: 8px; background: #434d58; }
.tabscroll svg { width: 7px; height: 9px; fill: #20262d; stroke: #20262d; }

.canvas { position: relative; flex: 1; min-height: 0; }
.drawing { display: block; width: 100%; height: 100%; }
.tooltip {
  position: absolute; left: 406px; top: 151px; width: 68px; height: 19px; padding-left: 3px;
  background: #ae9798; border: 1px solid #47302f; color: #261719; font-size: 11px; line-height: 14px;
}
.mdi { position: absolute; top: 4px; right: 5px; display: flex; gap: 1px; }
.mdi svg { width: 10px; height: 10px; fill: none; stroke: #e3e6e9; stroke-width: 1.5; }

.layouttabs { display: flex; height: 13px; flex: none; background: #2b2e33; }
.tabnav { display: flex; gap: 1px; padding-left: 2px; }
.tabnav button { width: 10px; background: #343c47; }
.tabnav svg { width: 7px; height: 7px; fill: #8393a2; stroke: #8393a2; }
.layout {
  width: 36px; margin-right: -4px; background: #3c4450; color: #c9ced4; line-height: 13px;
  clip-path: polygon(0 0, 100% 0, 31px 100%, 5px 100%);
}
.layout.active { background: #4f6789; color: #fff; font-weight: bold; }

/* command window */
.command { display: flex; flex: none; border-top: 1px solid #353b41; font-size: 10px; line-height: 10px; white-space: nowrap; }
.command-close { width: 14px; background: #3b434f; align-items: flex-start; padding-top: 2px; }
.command-close svg, .scroll svg { width: 8px; height: 8px; fill: none; stroke: #7e8791; }
.command-main { flex: 1; }
.log { display: flex; border-bottom: 1px solid #4b5055; }
.lines { flex: 1; padding-bottom: 1px; }
.lines p { margin: 0; padding-left: 1px; color: #b4b8bc; }
.lines .marked { width: max-content; border-bottom: 1px solid #a51e26; }
.scroll { width: 9px; display: flex; flex-direction: column; background: #333a44; align-items: center; }
.thumb { width: 7px; height: 6px; margin-top: auto; background: #4f5b69; }
.prompt { display: flex; align-items: center; height: 14px; padding: 0 0 1px 1px; color: #b4b8bc; }
.cursor { width: 1px; height: 10px; margin-left: 4px; background: #b4b8bc; }
.prompt input { flex: 1; border: 0; padding: 0; background: none; color: inherit; font: inherit; outline: 0; }

/* status bar */
.statusbar { display: flex; align-items: center; height: 14px; flex: none; background: #2d3541; padding: 0 13px 0 5px; }
.coords { width: 156px; font: 600 7px/12px "Open Sans", sans-serif; }
.modes { display: flex; }
.modes .on { background: #355a80; border: 1px solid #4785bb; border-width: 1px 0 1px 1px; }
.annotation { display: flex; margin-left: auto; }
.ratio { width: 20px; color: #777c70; font-size: 8px; gap: 1px; }
```
FILE: hatch.js
```js
// concrete hatch: short strokes and dots, fixed seed so it never changes
let seed = 20;
function rnd() {
  seed = (seed * 16807) % 2147483647;
  return seed / 2147483647;
}

let d = '';
for (let i = 0; i < 360; i++) {
  const x = 50 + rnd() * 415, y = 84 + rnd() * 202;
  const strokes = rnd() < 0.45 ? 2 : 1;
  for (let s = 0; s < strokes; s++) {
    const a = rnd() * Math.PI, len = 3 + rnd() * 3;
    const sx = x + s * 4, sy = y + s * 2;
    d += `M${sx.toFixed(1)} ${sy.toFixed(1)}l${(Math.cos(a) * len).toFixed(1)} ${(Math.sin(-a) * len).toFixed(1)}`;
  }
}
for (let i = 0; i < 520; i++) {
  d += `M${Math.round(50 + rnd() * 415)} ${Math.round(84 + rnd() * 202)}.5h1`;
}
document.getElementById('concrete').setAttribute('d', d);
```
